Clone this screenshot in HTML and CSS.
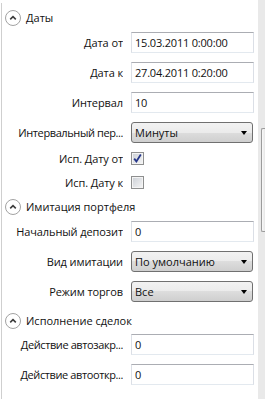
FILE: index.html
```html
<!DOCTYPE html>
<html>
<head>
<meta charset="utf-8">
<link rel="stylesheet" href="styles.css">
</head>
<body>
<div class="page">
  <div class="panel">
    <div class="header h1">
      <span class="toggle"><svg width="16" height="16" viewBox="0 0 16 16"><circle cx="8" cy="8" r="7.5" fill="#fff" stroke="#a2a2a2"/><path d="M5.2 9.3 L8 6.6 L10.8 9.3" fill="none" stroke="#3c3c3c" stroke-width="1.6"/></svg></span>
      <span class="htext">Даты</span>
    </div>
    <div class="row"><div class="label">Дата от</div><div class="input">15.03.2011 0:00:00</div></div>
    <div class="row"><div class="label">Дата к</div><div class="input">27.04.2011 0:20:00</div></div>
    <div class="row"><div class="label">Интервал</div><div class="input">10</div></div>
    <div class="row"><div class="label trunc">Интервальный пер...</div><div class="combo"><span class="ctext">Минуты</span><span class="arrow"></span></div></div>
    <div class="cbrow cb1"><div class="label">Исп. Дату от</div><div class="check"><svg width="11" height="11" viewBox="0 0 11 11"><path d="M2.2 5.6 L4.4 8.4 L8.8 1.6" fill="none" stroke="#26378a" stroke-width="1.8"/></svg></div></div>
    <div class="cbrow cb2"><div class="label">Исп. Дату к</div><div class="check"></div></div>
    <div class="header h2">
      <span class="toggle"><svg width="16" height="16" viewBox="0 0 16 16"><circle cx="8" cy="8" r="7.5" fill="#fff" stroke="#a2a2a2"/><path d="M5.2 9.3 L8 6.6 L10.8 9.3" fill="none" stroke="#3c3c3c" stroke-width="1.6"/></svg></span>
      <span class="htext">Имитация портфеля</span>
    </div>
    <div class="row"><div class="label">Начальный депозит</div><div class="input">0</div></div>
    <div class="row"><div class="label">Вид имитации</div><div class="combo"><span class="ctext">По умолчанию</span><span class="arrow"></span></div></div>
    <div class="row"><div class="label">Режим торгов</div><div class="combo"><span class="ctext">Все</span><span class="arrow"></span></div></div>
    <div class="header h3">
      <span class="toggle"><svg width="16" height="16" viewBox="0 0 16 16"><circle cx="8" cy="8" r="7.5" fill="#fff" stroke="#a2a2a2"/><path d="M5.2 9.3 L8 6.6 L10.8 9.3" fill="none" stroke="#3c3c3c" stroke-width="1.6"/></svg></span>
      <span class="htext">Исполнение сделок</span>
    </div>
    <div class="row"><div class="label trunc">Действие автозакр...</div><div class="input">0</div></div>
    <div class="row"><div class="label trunc">Действие автооткр...</div><div class="input">0</div></div>
  </div>
  <div class="scroll"><div class="thumb"></div></div>
</div>
</body>
</html>
```
FILE: styles.css
```css
html, body {
  margin: 0;
  padding: 0;
  background: #fff;
}
body {
  width: 265px;
  height: 399px;
  overflow: hidden;
  font-family: "Open Sans", "Noto Sans", sans-serif;
  font-size: 11px;
  color: #111;
}
.page {
  display: flex;
  height: 399px;
}
.panel {
  flex: 1;
  margin-left: 1px;
  margin-top: 3px;
  border-left: 1px solid #cfcfcf;
  padding-right: 3px;
}
.header {
  display: flex;
  align-items: center;
  height: 16px;
  padding-left: 3px;
}
.h1 { margin-top: 7px; margin-bottom: 6px; }
.h2 { margin-top: 10px; margin-bottom: 6px; }
.h3 { margin-top: 11px; margin-bottom: 5px; }
.toggle {
  display: flex;
  width: 16px;
  height: 16px;
}
.htext {
  margin-left: 5px;
  line-height: 16px;
  white-space: nowrap;
}
.row {
  display: flex;
  align-items: center;
  height: 21px;
  margin-bottom: 9px;
}
.label {
  flex: none;
  width: 121px;
  padding-left: 4px;
  margin-right: 8px;
  box-sizing: border-box;
  text-align: right;
  white-space: nowrap;
  overflow: hidden;
  letter-spacing: -0.1px;
}
.label.trunc {
  padding-left: 2px;
  letter-spacing: -0.4px;
}
.input {
  width: 123px;
  height: 21px;
  box-sizing: border-box;
  border: 1px solid #dbdfe6;
  border-top-color: #abadb3;
  border-bottom-color: #e3e9ef;
  padding-left: 3px;
  line-height: 19px;
  white-space: nowrap;
  background: #fff;
  letter-spacing: -0.2px;
}
.combo {
  width: 122px;
  height: 21px;
  box-sizing: border-box;
  border: 1px solid #707070;
  border-radius: 3px;
  background: linear-gradient(#f2f2f2 0%, #ebebeb 50%, #dddddd 50%, #cfcfcf 100%);
  display: flex;
  align-items: center;
  justify-content: space-between;
  padding-left: 3px;
  padding-right: 5px;
}
.ctext {
  line-height: 19px;
  white-space: nowrap;
}
.arrow {
  width: 0;
  height: 0;
  border-left: 3.5px solid transparent;
  border-right: 3.5px solid transparent;
  border-top: 4px solid #000;
}
.cbrow {
  display: flex;
  align-items: center;
  height: 13px;
}
.cb1 { margin-top: 1px; margin-bottom: 11px; }
.check {
  width: 13px;
  height: 13px;
  box-sizing: border-box;
  border: 1px solid #8e8f8f;
  background: linear-gradient(135deg, #cbcfd5 0%, #f6f6f6 100%);
  box-shadow: inset 0 0 0 1px #f4f4f4;
  display: flex;
  align-items: center;
  justify-content: center;
}
.scroll {
  width: 7px;
  flex: none;
  background: #e9e9e9;
}
.thumb {
  margin-top: 128px;
  margin-left: 3px;
  height: 104px;
  box-sizing: border-box;
  border: 1px solid #9b9b9b;
  border-right: none;
  border-radius: 2px 0 0 2px;
  background: linear-gradient(90deg, #fafafa, #e6e6e6);
}
```
